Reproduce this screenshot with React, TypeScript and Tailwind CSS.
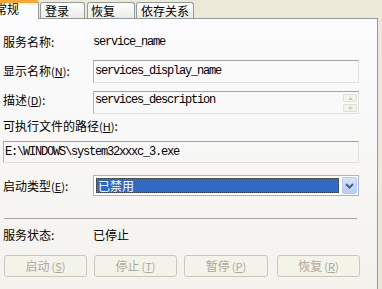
import React from "react";

const cjk = { fontFamily: "'Noto Sans CJK SC', 'Liberation Sans', sans-serif" };
const mono = {
  fontFamily: "'Liberation Mono', 'Noto Sans CJK SC', monospace",
  letterSpacing: "-1.2px",
};

function Label({ text, k }: { text: string; k?: string }) {
  return (
    <span className="text-[12px] leading-[14px] text-black whitespace-nowrap" style={cjk}>
      {text}
      {k ? (
        <>
          <span className="text-[11px]">(</span>
          <span className="underline text-[11px]">{k}</span>
          <span className="text-[11px]">)</span>
        </>
      ) : null}
      :
    </span>
  );
}

function Box({ children, className = "" }: { children?: React.ReactNode; className?: string }) {
  return (
    <div
      className={
        "border border-t-[#a3a29c] border-l-[#b3b2ac] border-r-[#e2e1dc] border-b-[#e2e1dc] bg-transparent " +
        className
      }
    >
      {children}
    </div>
  );
}

function Btn({ label, k, className = "" }: { label: string; k: string; className?: string }) {
  return (
    <div
      className={
        "w-[83px] h-[22px] rounded-[3px] border border-[#cac8bb] bg-[#f4f3ea] flex items-center justify-center text-[12px] text-[#aca899] " +
        className
      }
      style={cjk}
    >
      {label}
      <span className="text-[11px] ml-[2px]">(</span>
      <span className="underline text-[11px]">{k}</span>
      <span className="text-[11px]">)</span>
    </div>
  );
}

export default function App() {
  return (
    <div className="w-[382px] h-[289px] bg-[#ece9d8] overflow-hidden relative" style={cjk}>
      {/* tabs */}
      <div className="h-[18px] flex items-end relative z-10">
        <div className="ml-[-10px] w-[49px] h-[19px] mb-[-1px] bg-[#fcfcfe] border-r border-[#919b9c] border-t-[3px] border-t-[#f4a73a] rounded-tr-[3px] flex items-start">
          <span className="ml-[5px] mt-[-1px] text-[12px] leading-[14px] text-black">常规</span>
        </div>
        <div className="ml-[1px] w-[45px] h-[16px] bg-gradient-to-b from-[#fefefe] to-[#ecebe5] border border-b-0 border-[#919b9c] rounded-t-[3px] flex items-start">
          <span className="ml-[4px] mt-[1px] text-[12px] leading-[14px] text-black">登录</span>
        </div>
        <div className="ml-[2px] w-[48px] h-[16px] bg-gradient-to-b from-[#fefefe] to-[#ecebe5] border border-b-0 border-[#919b9c] rounded-t-[3px] flex items-start">
          <span className="ml-[3px] mt-[1px] text-[12px] leading-[14px] text-black">恢复</span>
        </div>
        <div className="ml-[1px] w-[58px] h-[16px] bg-gradient-to-b from-[#fefefe] to-[#ecebe5] border border-b-0 border-[#919b9c] rounded-t-[3px] flex items-start">
          <span className="ml-[4px] mt-[1px] text-[12px] leading-[14px] text-black">依存关系</span>
        </div>
      </div>

      {/* panel */}
      <div className="w-[378px] h-[271px] border-t border-r border-[#919b9c] bg-gradient-to-b from-[#fcfcfe] to-[#f3f2ed] pl-[3px] flex flex-col">
        {/* row 1 */}
        <div className="mt-[16px] h-[14px] flex items-center">
          <div className="w-[90px] flex">
            <Label text="服务名称" />
          </div>
          <span className="text-[12px] leading-[14px] text-black" style={mono}>
            service_name
          </span>
        </div>

        {/* row 2 */}
        <div className="mt-[11px] flex items-start">
          <div className="w-[90px] mt-[4px] flex">
            <Label text="显示名称" k="N" />
          </div>
          <Box className="w-[266px] h-[23px] pl-[1px] pt-[3px] flex">
            <span className="text-[12px] leading-[14px] text-black block" style={mono}>
              services_display_name
            </span>
          </Box>
        </div>

        {/* row 3 */}
        <div className="mt-[8px] flex items-start">
          <div className="w-[90px] mt-[2px] flex">
            <Label text="描述" k="D" />
          </div>
          <Box className="w-[266px] h-[23px] pl-[1px] pt-[1px] flex">
            <span className="flex-1 text-[12px] leading-[14px] text-black block" style={mono}>
              services_description
            </span>
            <div className="w-[14px] mr-[1px] flex flex-col gap-[2px] mt-[1px]">
              <div className="h-[8px] border border-[#e0dfd8] rounded-[1px] bg-[#f3f2ee] flex items-center justify-center">
                <svg width="5" height="3" viewBox="0 0 5 3">
                  <path d="M0 3 L2.5 0 L5 3 Z" fill="#c9c8c0" />
                </svg>
              </div>
              <div className="h-[8px] border border-[#e0dfd8] rounded-[1px] bg-[#f3f2ee] flex items-center justify-center">
                <svg width="5" height="3" viewBox="0 0 5 3">
                  <path d="M0 0 L2.5 3 L5 0 Z" fill="#c9c8c0" />
                </svg>
              </div>
            </div>
          </Box>
        </div>

        {/* row 4 */}
        <div className="mt-[5px] h-[14px] flex items-center">
          <Label text="可执行文件的路径" k="H" />
        </div>

        {/* row 5 */}
        <Box className="mt-[8px] w-[356px] h-[22px] pl-[1px] pt-[3px] flex">
          <span className="text-[12px] leading-[14px] text-black block" style={mono}>
            E:\WINDOWS\system32xxxc_3.exe
          </span>
        </Box>

        {/* row 6 */}
        <div className="mt-[12px] flex items-center">
          <div className="w-[90px] flex">
            <Label text="启动类型" k="E" />
          </div>
          <div className="w-[266px] h-[21px] border border-[#a5b4c8] bg-white flex items-center p-[1px]">
            <div className="flex-1 h-[15px] ml-[1px] bg-[#316ac5] outline-1 outline-dotted outline-[#3a3a3a] -outline-offset-1 flex items-center pl-[2px]">
              <span className="text-[12px] leading-[14px] text-white">已禁用</span>
            </div>
            <div className="w-[15px] h-[17px] ml-[3px] rounded-[2px] bg-gradient-to-b from-[#d6e3fd] to-[#b8cdf8] border border-[#b5c8f0] flex items-center justify-center">
              <svg width="9" height="6" viewBox="0 0 9 6">
                <path d="M1 1 L4.5 4.5 L8 1" stroke="#4d6185" strokeWidth="2" fill="none" />
              </svg>
            </div>
          </div>
        </div>

        {/* separator */}
        <div className="mt-[22px] w-[353px] h-[1px] bg-[#a8a79f] ml-[1px]" />

        {/* status */}
        <div className="mt-[9px] h-[14px] flex items-center">
          <div className="w-[90px] flex">
            <Label text="服务状态" />
          </div>
          <span className="text-[12px] leading-[14px] text-black">已停止</span>
        </div>

        {/* buttons */}
        <div className="mt-[13px] flex pl-[1px]">
          <Btn label="启动" k="S" />
          <Btn label="停止" k="T" className="ml-[7px]" />
          <Btn label="暂停" k="P" className="ml-[7px] w-[84px]" />
          <Btn label="恢复" k="R" className="ml-[9px]" />
        </div>
      </div>
    </div>
  );
}
